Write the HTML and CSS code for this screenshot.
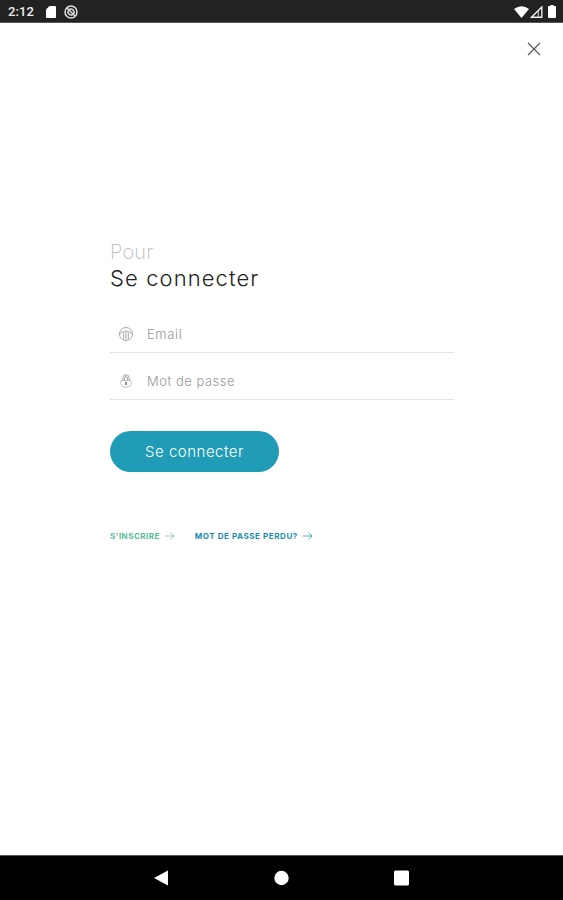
FILE: index.html
```html
<!DOCTYPE html>
<html lang="fr">
<head>
    <meta charset="UTF-8">
    <meta name="viewport" content="width=device-width, initial-scale=1.0">
    <title>Se connecter</title>
    <link rel="stylesheet" href="styles.css">
</head>
<body>
<div class="screen">
    <div class="status">
        <span class="time">2:12</span>
        <svg class="sd" width="10" height="12" viewBox="0 0 10 12"><path d="M3.5 0H9a1 1 0 0 1 1 1v10a1 1 0 0 1-1 1H1a1 1 0 0 1-1-1V3.5z" fill="#fff"/></svg>
        <svg class="sync" width="14" height="14" viewBox="0 0 14 14" fill="none" stroke="#ddd" stroke-width="1.5">
            <circle cx="7" cy="7" r="6"/>
            <path d="M3 3l8 8M5.500 4.200a3.300 3.300 0 0 1 4.300 4.300M8.500 9.800a3.300 3.300 0 0 1-4.300-4.300"/>
        </svg>
        <svg class="wifi" width="15" height="12" viewBox="0 0 15 12"><path d="M0 3Q7.500-2.500 15 3L7.500 12z" fill="#fff"/></svg>
        <svg class="signal" width="13" height="12" viewBox="0 0 13 12"><path d="M1.500 11.300L11.800 1v10.300z" fill="none" stroke="#eee" stroke-width="1.400"/><path d="M8.300 5v6" stroke="#ddd"/></svg>
        <svg class="battery" width="8" height="13" viewBox="0 0 8 13"><path d="M2.500 0h3v1H7a1 1 0 0 1 1 1v10a1 1 0 0 1-1 1H1a1 1 0 0 1-1-1V2a1 1 0 0 1 1-1h1.500z" fill="#fff"/></svg>
    </div>
    <div class="content">
        <div class="close">
            <svg width="14" height="14" viewBox="0 0 14 14"><path d="M1 1l12 12M13 1L1 13" stroke="#555" stroke-width="1.100"/></svg>
        </div>
        <form class="login">
            <h1><span class="pour">Pour</span><span class="title">Se connecter</span></h1>
            <label class="field">
                <svg width="16" height="16" viewBox="0 0 16 16" fill="none" stroke="#aaa" stroke-width="1">
                    <circle cx="8" cy="8" r="6.500"/>
                    <path d="M8 5v8.500M5.700 13.500V6.500Q8 3 10.300 6.500v7M2 7.500L5.700 5M14 7.500L10.300 5"/>
                </svg>
                <span class="email">Email</span>
            </label>
            <label class="field">
                <svg width="16" height="16" viewBox="0 0 16 16" fill="none" stroke="#999" stroke-width=".9">
                    <path d="M4.800 7.500V5a3.200 3.200 0 0 1 6.400 0v2.500M6.400 7.500V5.200a1.600 1.600 0 0 1 3.200 0v2.300"/>
                    <path d="M3.300 7.500h9.400q1.500 3 0 5-1.200 1.700-4.700 1.700t-4.700-1.700q-1.500-2 0-5z" stroke="#bbb"/>
                    <path d="M8 9v3" stroke="#666" stroke-width="1.500"/>
                </svg>
                <span class="pass">Mot de passe</span>
            </label>
            <button class="submit" type="button">Se connecter</button>
            <div class="links">
                <a class="signup"><span>S'INSCRIRE</span>
                    <svg width="10" height="8" viewBox="0 0 10 8"><path d="M0 4h9M5.500.5L9 4 5.500 7.500"/></svg>
                </a>
                <a class="lost"><span>MOT DE PASSE PERDU?</span>
                    <svg width="10" height="8" viewBox="0 0 10 8"><path d="M0 4h9M5.500.5L9 4 5.500 7.500"/></svg>
                </a>
            </div>
        </form>
    </div>
    <div class="nav">
        <svg width="15" height="16" viewBox="0 0 15 16"><path d="M14 .5v15L0 8z" fill="#fff"/></svg>
        <svg width="15" height="16" viewBox="0 0 15 16"><circle cx="7.500" cy="8" r="7.200" fill="#fff"/></svg>
        <svg width="15" height="16" viewBox="0 0 15 16"><rect y=".5" width="15" height="15" rx="1.500" fill="#fff"/></svg>
    </div>
</div>
</body>
</html>
```

FILE: styles.css
```css
body,h1{
    margin: 0;
    padding: 0;
}
svg{
    display: block;
    flex: none;
}
.screen{
    width: 563px;height: 900px;
    display: flex;
    flex-direction: column;
    background-color: #fff;
    font-family: Inter, "Liberation Sans", sans-serif;
    overflow: hidden;
}
.status{
    box-sizing: border-box;
    height: 23px;
    padding: 1px 7px 0 8px;
    display: flex;
    align-items: center;
    background-color: #222;
    border-bottom: 1px solid #555;
}
.time{
    width: 38px;
    color: #eee;
    font: 500 13px/20px Roboto, sans-serif;
    letter-spacing: .1px;
}
.sync{
    margin-left: 8px;
}
.wifi{
    margin-left: auto;
}
.signal{
    margin-left: 1px;
}
.battery{
    margin-left: 5px;
}
.content{
    flex: 1;
}
.close{
    display: flex;
    justify-content: flex-end;
    padding: 19px 22px 0 0;
}
.login{
    width: 344px;
    margin: 183px 0 0 110px;
}
h1{
    font-size: 22px;
    font-weight: 300;
    line-height: 26px;
}
h1 span{
    display: block;
}
.pour{
    color: #bbb;
    font-size: 20px;
    font-weight: 200;
    letter-spacing: .2px;
}
.title{
    color: #222;
    letter-spacing: 1.1px;
}
.field{
    box-sizing: border-box;
    height: 47px;
    padding: 9px 0 0 8px;
    display: flex;
    align-items: center;
    gap: 13px;
    border-bottom: 1px solid #e4e4e4;
    color: #999;
    font-size: 13px;
    font-weight: 300;
}
.email{
    letter-spacing: .6px;
}
.pass{
    letter-spacing: .5px;
}
h1 + .field{
    margin-top: 15px;
}
.submit{
    display: block;
    width: 169px;height: 41px;
    margin-top: 31px;
    padding: 0;
    border: 0;
    border-radius: 21px;
    background-color: #209cb7;
    color: #fff;
    font: 300 15px/40px Inter, "Liberation Sans", sans-serif;
    letter-spacing: .5px;
}
.links{
    display: flex;
    gap: 20px;
    margin-top: 59px;
    font-size: 8px;
    font-weight: 700;
    line-height: 10px;
}
.links a{
    display: flex;
    align-items: center;
    gap: 5px;
    white-space: nowrap;
}
.links svg{
    fill: none;
    stroke: currentColor;
    stroke-width: .7;
}
.signup{
    color: #56bd98;
    letter-spacing: .47px;
}
.lost{
    color: #168eae;
    letter-spacing: .58px;
}
.nav{
    box-sizing: border-box;
    height: 45px;
    display: flex;
    justify-content: center;
    align-items: center;
    gap: 105px;
    background-color: #000;
    border-top: 1px solid #555;
}
```
